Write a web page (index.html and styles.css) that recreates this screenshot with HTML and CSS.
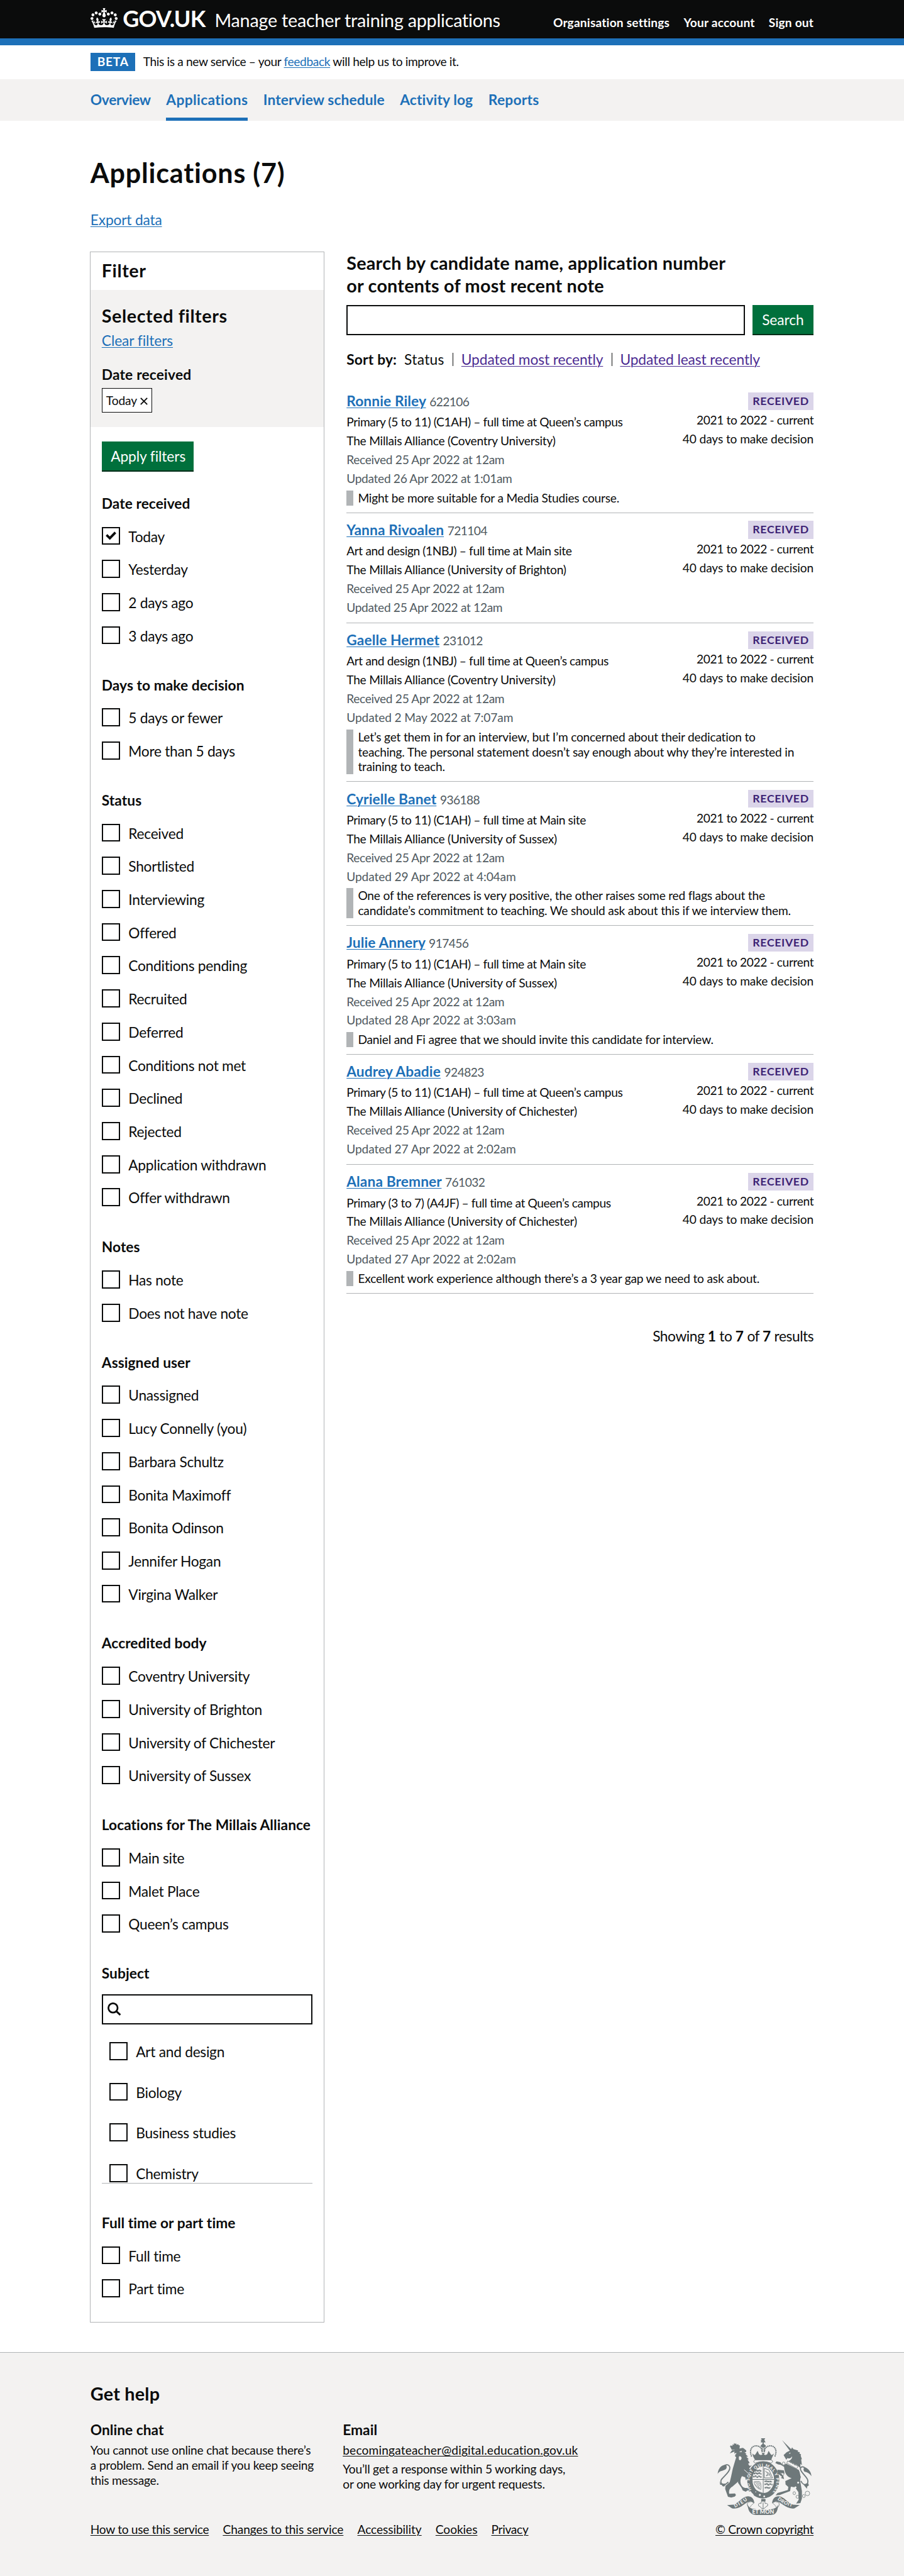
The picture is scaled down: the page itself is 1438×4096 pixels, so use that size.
FILE: index.html
```html
<!DOCTYPE html>
<html lang="en">
<head>
<meta charset="utf-8">
<title>Applications (7) - Manage teacher training applications - GOV.UK</title>
<link rel="stylesheet" href="styles.css">
</head>
<body>
<header class="header">
  <div class="container header-row">
    <a class="logo">
      <svg class="crown" viewBox="0 0 132 97"><path fill="currentColor" fill-rule="evenodd" d="M25 30.2c3.5 1.5 7.7-.2 9.1-3.7 1.5-3.6-.2-7.8-3.9-9.2-3.6-1.4-7.6.3-9.1 3.9-1.4 3.5.3 7.5 3.9 9zM9 39.5c3.6 1.5 7.8-.2 9.2-3.7 1.5-3.6-.2-7.8-3.9-9.1-3.6-1.5-7.6.2-9.1 3.8-1.4 3.5.3 7.5 3.8 9zM4.4 57.2c3.5 1.5 7.7-.2 9.1-3.8 1.5-3.6-.2-7.7-3.9-9.1-3.5-1.5-7.6.3-9.1 3.8-1.4 3.5.3 7.6 3.9 9.1zm38.3-21.4c3.5 1.5 7.7-.2 9.1-3.8 1.5-3.6-.2-7.7-3.9-9.1-3.6-1.5-7.6.3-9.1 3.8-1.3 3.6.4 7.7 3.9 9.1zm64.4-5.6c-3.6 1.5-7.8-.2-9.1-3.7-1.5-3.6.2-7.8 3.8-9.2 3.6-1.4 7.7.3 9.2 3.9 1.3 3.5-.4 7.5-3.9 9zm15.9 9.3c-3.6 1.5-7.7-.2-9.1-3.7-1.5-3.6.2-7.8 3.7-9.1 3.6-1.5 7.7.2 9.2 3.8 1.5 3.5-.3 7.5-3.8 9zm4.7 17.7c-3.6 1.5-7.8-.2-9.2-3.8-1.5-3.6.2-7.7 3.9-9.1 3.6-1.5 7.7.3 9.2 3.8 1.3 3.5-.4 7.6-3.9 9.1zM89.3 35.8c-3.6 1.5-7.8-.2-9.2-3.8-1.4-3.6.2-7.7 3.9-9.1 3.6-1.5 7.7.3 9.2 3.8 1.4 3.6-.3 7.7-3.9 9.1zM69.7 17.7l8.9 4.7V9.3l-8.9 2.8c-.2-.3-.5-.6-.9-.9L72.4 0H59.6l3.5 11.2c-.3.3-.6.5-.9.9l-8.8-2.8v13.1l8.8-4.7c.3.3.6.7.9.9l-5 15.4v.1c-.2.8-.4 1.6-.4 2.4 0 4.1 3.1 7.5 7 8.1h.2c.3 0 .7.1 1 .1.4 0 .7 0 1-.1h.2c4-.6 7.1-4.1 7.1-8.1 0-.8-.1-1.7-.4-2.4V34l-5.1-15.4c.4-.2.7-.6 1-.9zM66 92.8c16.9 0 32.8 1.1 47.1 3.2 4-16.9 8.9-26.7 14-33.5l-9.6-3.4c1 4.9 1.1 7.2 0 10.2-1.5-1.4-3-4.3-4.2-8.7L108.6 76c2.8-2 5-3.2 7.5-3.3-4.4 9.4-10 11.9-13.6 11.2-4.3-.8-6.3-4.6-5.6-7.9 1-4.7 5.7-5.9 8-.5 4.3-8.7-3-11.4-7.6-8.8 7.1-7.2 7.9-13.5 2.1-21.1-8 6.1-8.1 12.3-4.5 20.8-4.7-5.4-12.1-2.5-9.5 6.2 3.4-5.2 7.9-2 7.2 3.1-.6 4.3-6.4 7.8-13.5 7.2-10.3-.9-10.9-8-11.2-13.8 2.5-.5 7.1 1.8 11 7.3L80.2 60c-4.1 4.4-8 5.3-12.3 5.4 1.4-4.4 8-11.6 8-11.6H55.5s6.4 7.2 7.9 11.6c-4.2-.1-8-1-12.3-5.4l1.4 16.4c3.9-5.5 8.5-7.7 10.9-7.3-.3 5.8-.9 12.8-11.1 13.8-7.2.6-12.9-2.9-13.5-7.2-.7-5 3.8-8.3 7.1-3.1 2.7-8.7-4.6-11.6-9.4-6.2 3.7-8.5 3.6-14.7-4.6-20.8-5.8 7.6-5 13.9 2.2 21.1-4.7-2.6-11.9.1-7.7 8.8 2.3-5.5 7.1-4.2 8.1.5.7 3.3-1.3 7.1-5.7 7.9-3.5.7-9-1.8-13.5-11.2 2.5.1 4.7 1.3 7.5 3.3l-4.7-15.4c-1.2 4.4-2.7 7.2-4.3 8.7-1.1-3-.9-5.3 0-10.2l-9.5 3.4c5 6.9 9.9 16.7 14 33.5 14.8-2.1 30.8-3.2 47.7-3.2z"/></svg>
      <span class="logo-text">GOV.UK</span>
    </a>
    <span class="product">Manage teacher training applications</span>
    <nav class="account"><a>Organisation settings</a><a>Your account</a><a>Sign out</a></nav>
  </div>
</header>
<div class="container phase"><strong class="phase-tag">BETA</strong><span>This is a new service – your <a class="link">feedback</a> will help us to improve it.</span></div>
<nav class="nav"><div class="container nav-row"><a>Overview</a><a class="current">Applications</a><a>Interview schedule</a><a>Activity log</a><a>Reports</a></div></nav>

<main class="container main">
  <h1>Applications (7)</h1>
  <p class="export"><a class="link">Export data</a></p>
  <div class="columns">
    <aside class="filter">
      <div class="filter-head"><h2>Filter</h2></div>
      <div class="selected">
        <h2>Selected filters</h2>
        <p class="clear"><a class="link">Clear filters</a></p>
        <h3>Date received</h3>
        <a class="chip">Today <svg viewBox="0 0 10 10"><path d="M.7.7l8.6 8.6M9.3.7L.7 9.3" stroke="currentColor" stroke-width="1.6"/></svg></a>
      </div>
      <div class="options">
        <button class="button apply">Apply filters</button>
        <fieldset><legend>Date received</legend>
          <label><i class="box"><svg viewBox="0 0 24 24"><path d="M6.2 10.6l4.4 4.2 7.4-7.6" fill="none" stroke="currentColor" stroke-width="3.2"/></svg></i>Today</label>
          <label><i class="box"></i>Yesterday</label>
          <label><i class="box"></i>2 days ago</label>
          <label><i class="box"></i>3 days ago</label>
        </fieldset>
        <fieldset><legend>Days to make decision</legend>
          <label><i class="box"></i>5 days or fewer</label>
          <label><i class="box"></i>More than 5 days</label>
        </fieldset>
        <fieldset><legend>Status</legend>
          <label><i class="box"></i>Received</label>
          <label><i class="box"></i>Shortlisted</label>
          <label><i class="box"></i>Interviewing</label>
          <label><i class="box"></i>Offered</label>
          <label><i class="box"></i>Conditions pending</label>
          <label><i class="box"></i>Recruited</label>
          <label><i class="box"></i>Deferred</label>
          <label><i class="box"></i>Conditions not met</label>
          <label><i class="box"></i>Declined</label>
          <label><i class="box"></i>Rejected</label>
          <label><i class="box"></i>Application withdrawn</label>
          <label><i class="box"></i>Offer withdrawn</label>
        </fieldset>
        <fieldset><legend>Notes</legend>
          <label><i class="box"></i>Has note</label>
          <label><i class="box"></i>Does not have note</label>
        </fieldset>
        <fieldset><legend>Assigned user</legend>
          <label><i class="box"></i>Unassigned</label>
          <label><i class="box"></i>Lucy Connelly (you)</label>
          <label><i class="box"></i>Barbara Schultz</label>
          <label><i class="box"></i>Bonita Maximoff</label>
          <label><i class="box"></i>Bonita Odinson</label>
          <label><i class="box"></i>Jennifer Hogan</label>
          <label><i class="box"></i>Virgina Walker</label>
        </fieldset>
        <fieldset><legend>Accredited body</legend>
          <label><i class="box"></i>Coventry University</label>
          <label><i class="box"></i>University of Brighton</label>
          <label><i class="box"></i>University of Chichester</label>
          <label><i class="box"></i>University of Sussex</label>
        </fieldset>
        <fieldset><legend>Locations for The Millais Alliance</legend>
          <label><i class="box"></i>Main site</label>
          <label><i class="box"></i>Malet Place</label>
          <label><i class="box"></i>Queen’s campus</label>
        </fieldset>
        <fieldset class="subject"><legend>Subject</legend>
          <div class="subject-search"><svg viewBox="0 0 18 18"><circle cx="7.3" cy="7.3" r="6.1" fill="none" stroke="currentColor" stroke-width="2.3"/><path d="M11.6 11.6l5.4 5" stroke="currentColor" stroke-width="2.5"/></svg></div>
          <div class="scroll">
            <label><i class="box"></i>Art and design</label>
            <label><i class="box"></i>Biology</label>
            <label><i class="box"></i>Business studies</label>
            <label><i class="box"></i>Chemistry</label>
          </div>
        </fieldset>
        <fieldset class="last"><legend>Full time or part time</legend>
          <label><i class="box"></i>Full time</label>
          <label><i class="box"></i>Part time</label>
        </fieldset>
      </div>
    </aside>

    <section class="results">
      <h2 class="search-label">Search by candidate name, application number<br>or contents of most recent note</h2>
      <div class="search"><input class="search-input" type="text"><button class="button">Search</button></div>
      <div class="sort"><b>Sort by:</b><span>Status</span><i></i><a class="link visited">Updated most recently</a><i></i><a class="link visited">Updated least recently</a></div>

      <article class="card">
        <div class="info"><h3><a class="link">Ronnie Riley</a> <small>622106</small></h3>
          <p class="course">Primary (5 to 11) (C1AH) – full time at Queen’s campus</p><p class="provider">The Millais Alliance (Coventry University)</p>
          <p class="muted tight">Received 25 Apr 2022 at 12am</p><p class="muted tight">Updated 26 Apr 2022 at 1:01am</p></div>
        <div class="state"><strong class="tag">RECEIVED</strong><p class="cycle">2021 to 2022 - current</p><p>40 days to make decision</p></div>
        <blockquote>Might be more suitable for a Media Studies course.</blockquote>
      </article>
      <article class="card plain">
        <div class="info"><h3><a class="link">Yanna Rivoalen</a> <small>721104</small></h3>
          <p class="course">Art and design (1NBJ) – full time at Main site</p><p class="provider">The Millais Alliance (University of Brighton)</p>
          <p class="muted tight">Received 25 Apr 2022 at 12am</p><p class="muted tight">Updated 25 Apr 2022 at 12am</p></div>
        <div class="state"><strong class="tag">RECEIVED</strong><p class="cycle">2021 to 2022 - current</p><p>40 days to make decision</p></div>
      </article>
      <article class="card">
        <div class="info"><h3><a class="link">Gaelle Hermet</a> <small>231012</small></h3>
          <p class="course">Art and design (1NBJ) – full time at Queen’s campus</p><p class="provider">The Millais Alliance (Coventry University)</p>
          <p class="muted tight">Received 25 Apr 2022 at 12am</p><p class="muted">Updated 2 May 2022 at 7:07am</p></div>
        <div class="state"><strong class="tag">RECEIVED</strong><p class="cycle">2021 to 2022 - current</p><p>40 days to make decision</p></div>
        <blockquote>Let’s get them in for an interview, but I’m concerned about their dedication to<br>teaching. The personal statement doesn’t say enough about why they’re interested in<br>training to teach.</blockquote>
      </article>
      <article class="card">
        <div class="info"><h3><a class="link">Cyrielle Banet</a> <small>936188</small></h3>
          <p class="course">Primary (5 to 11) (C1AH) – full time at Main site</p><p class="provider">The Millais Alliance (University of Sussex)</p>
          <p class="muted tight">Received 25 Apr 2022 at 12am</p><p class="muted">Updated 29 Apr 2022 at 4:04am</p></div>
        <div class="state"><strong class="tag">RECEIVED</strong><p class="cycle">2021 to 2022 - current</p><p>40 days to make decision</p></div>
        <blockquote>One of the references is very positive, the other raises some red flags about the<br>candidate’s commitment to teaching. We should ask about this if we interview them.</blockquote>
      </article>
      <article class="card">
        <div class="info"><h3><a class="link">Julie Annery</a> <small>917456</small></h3>
          <p class="course">Primary (5 to 11) (C1AH) – full time at Main site</p><p class="provider">The Millais Alliance (University of Sussex)</p>
          <p class="muted tight">Received 25 Apr 2022 at 12am</p><p class="muted">Updated 28 Apr 2022 at 3:03am</p></div>
        <div class="state"><strong class="tag">RECEIVED</strong><p class="cycle">2021 to 2022 - current</p><p>40 days to make decision</p></div>
        <blockquote>Daniel and Fi agree that we should invite this candidate for interview.</blockquote>
      </article>
      <article class="card plain">
        <div class="info"><h3><a class="link">Audrey Abadie</a> <small>924823</small></h3>
          <p class="course">Primary (5 to 11) (C1AH) – full time at Queen’s campus</p><p class="provider">The Millais Alliance (University of Chichester)</p>
          <p class="muted tight">Received 25 Apr 2022 at 12am</p><p class="muted">Updated 27 Apr 2022 at 2:02am</p></div>
        <div class="state"><strong class="tag">RECEIVED</strong><p class="cycle">2021 to 2022 - current</p><p>40 days to make decision</p></div>
      </article>
      <article class="card">
        <div class="info"><h3><a class="link">Alana Bremner</a> <small>761032</small></h3>
          <p class="course">Primary (3 to 7) (A4JF) – full time at Queen’s campus</p><p class="provider">The Millais Alliance (University of Chichester)</p>
          <p class="muted tight">Received 25 Apr 2022 at 12am</p><p class="muted">Updated 27 Apr 2022 at 2:02am</p></div>
        <div class="state"><strong class="tag">RECEIVED</strong><p class="cycle">2021 to 2022 - current</p><p>40 days to make decision</p></div>
        <blockquote>Excellent work experience although there’s a 3 year gap we need to ask about.</blockquote>
      </article>
      <p class="showing">Showing <b>1</b> to <b>7</b> of <b>7</b> results</p>
    </section>
  </div>
</main>

<footer class="footer">
  <div class="container footer-grid">
    <div class="help">
      <h2>Get help</h2>
      <div class="help-columns">
        <div><h3>Online chat</h3><p>You cannot use online chat because there’s<br>a problem. Send an email if you keep seeing<br>this message.</p></div>
        <div><h3>Email</h3><p class="email"><a class="link">becomingateacher@digital.education.gov.uk</a></p><p class="gap">You’ll get a response within 5 working days,<br>or one working day for urgent requests.</p></div>
      </div>
      <div class="footer-links"><a class="link">How to use this service</a><a class="link wide">Changes to this service</a><a class="link wide">Accessibility</a><a class="link wide">Cookies</a><a class="link">Privacy</a></div>
    </div>
    <div class="copyright">
      <svg class="crest" viewBox="72 60 750 612">
        <defs>
          <path id="garter" d="M344 470A107 121 0 1 1 515 486"/>
          <path id="left-scroll" d="M212 612Q265 590 318 548"/>
          <path id="right-scroll" d="M550 548Q610 595 680 608"/>
        </defs>
        <g class="ink">
          <!-- lion -->
          <path d="M188 153l-15-29 8-8 10 6 4-14 8 6 3-17 8 8 8-5 4 12 12-6 4 9 10 3-4 30z"/>
          <path d="M172 180l17-24 84-20 8 3 22 19-2 12-12 2 16 13-8 2 20 18-14 3 20 18-10 3 17 28-12 4c8 18 12 24 30 12l-22 27c16 20 30 42 37 62l4 46-30 13-8-14-12 4-3-26-14 8-6-22-26-9c-12 20-14 40-9 60 8 22 20 34 42 34h26l12 14-6 16-20-12-14 12-24-10-10-22-28-40 2-10-46 40c-24 14-30 30-26 58l46-2 8 12-10 12-28 8-26-6-22-62 2-25 34-30c14-50 18-80 24-105l22-75 6-18-10-8 4-16-10-4 2-18z"/>
          <path d="M75 346c2-34 18-64 52-73 18-8 28 20 12 34-10 8-34 14-42 16-12 6-18 12-22 23z"/>
          <path d="M88 402c10 28 34 32 60 18l-22 24-14-4-4-10-12 0z"/>
          <!-- unicorn -->
          <path d="M588 75l82 82-18 6z"/>
          <path d="M600 194l24-22 30-16 14-24 10 14 38 12-4 8 18 6-4 8 14 10-4 8 10 28-6 2 6 46-12-10v34l-14-14c-24-18-44-22-78-42 20-14 26-22 26-38-10 16-22 20-38 14l-8 14z"/>
          <path d="M622 262l96 46c16 26 18 52 14 90l14 82v60l-12 36-34 4 20-30-2-60-26-40-34-4-6 34-48 18-34 14-34 2 16-18 36-10 46-14 4-24-22-20-2-28 50-22c-38-10-56-40-60-90l-26-16-22-4-22-12 10-12 30 6 24 26z"/>
          <path d="M602 316l-52-6 6 32 32 26-10 8 26 10-6-26-24-26 34 8z"/>
          <path d="M822 362c-2-32-20-56-48-70-16 0-20 20-8 34 26 6 42 16 56 36z"/>
          <path d="M760 430l34-14 8 18-14 10-2 18z"/>
          <!-- royal crown -->
          <path d="M420 60h34l-8 14 8 12v-10 20l-10-6-3 14 16 12h-38l14-12-3-14-10 6V70l8 6zM417 116h42l-4 14-16 6-18-6zM427 138h7v32h-7zM441 138h7v32h-7zM360 210l-10-28 18 12 8-6 17-28 12 28 14 6 18-8 18 8 14-6 12-28 17 28 8 6 18-12-14 28-8 22H372z"/>
          <path d="M425 176h26l-8 14 8 14h-26l8-14z"/>
          <!-- ribbons -->
          <path d="M150 592l52-4c46-16 74-70 118-66 36 4 44 30 48 56l-28-14c-44-4-78 68-150 54zM728 592l-54-4c-46-16-74-70-118-66-36 4-44 30-48 56l28-14c44-4 82 66 150 54zM310 578c4 20 24 42 50 44 52 10 106 10 156 0 22-4 42-24 44-40-8 40-8 68-36 84-54 12-118 12-170 0-30-16-36-40-44-88zM422 543h34v20h-34z"/>
        </g>
        <g class="line">
          <path d="M160 408c-28 32-74 20-56-18 22-30 72-64 68-98-6-26-36-28-46-6" stroke-width="9"/>
          <path d="M738 400c22 48 70 30 52-14-18-34-56-56-56-84 2-20 30-18 36-2" stroke-width="9"/>
          <path d="M346 205C320 150 352 112 394 122c26 6 34 24 34 48M530 205c26-55-6-93-48-83-26 6-34 24-34 48" stroke-width="10" stroke-dasharray="10 4"/>
          <path d="M374 232h128c18 10 10 22-4 26-40-16-84-16-124 0-14-6-16-18 0-26z" fill="#f3f2f1" stroke-width="5"/>
          <path d="M340 566c-32-2-38 24-18 44M536 566c32-2 38 24 18 44M362 576c-14 18-26 18-26 32M514 576c14 18 26 18 26 32" stroke-width="4"/>
          <g stroke-width="4"><ellipse cx="601" cy="261" rx="11" ry="12"/><ellipse cx="592" cy="345" rx="11" ry="13"/><ellipse cx="725" cy="369" rx="11" ry="13"/><ellipse cx="685" cy="497" rx="10" ry="12"/><ellipse cx="711" cy="526" rx="12" ry="12"/><ellipse cx="761" cy="520" rx="11" ry="12"/><circle cx="790" cy="499" r="18"/></g>
          <ellipse cx="438" cy="391" rx="107" ry="126" stroke-width="42"/>
          <path d="M427 620l-14-16c-24-4-12-36 8-24-4-12 8-22 16-24 10 6 18 14 16 24 22-10 30 20 8 24l-16 16zM437 570v50" stroke-width="5"/>
        </g>
        <ellipse class="paper" cx="438" cy="388" rx="86" ry="104"/>
        <g class="line" stroke-width="5">
          <path d="M438 284v212M350 388h176"/>
          <path d="M372 322l14-8 10 8 12-8 14 10M362 344l16-8 12 8 14-8 20 10M358 368l18-8 14 10 14-8 20 8M448 404l16-4 10 8 16-6 18 6M448 428l18-6 12 10 14-8 20 6M450 456l16-6 10 8 20-6" stroke-width="11" stroke-dasharray="13 3"/>
          <path d="M446 300l38 12 28 64h-66zM456 320l18 22-12 18 24-12 12 20M470 330l24 18" stroke-width="5"/>
          <path d="M366 406l40-2c14 4 16 40 12 64-30-10-50-32-52-62zM376 408l34 50M388 408l24 34M400 408l14 20M368 424l40 38" stroke-width="4"/>
        </g>
        <path class="ink" d="M364 494c-6-18 22-28 36-12 30 16 72 20 108 24-34 38-96 42-138 14-10-6-12-16-6-26z"/>
        <g class="paper"><circle cx="411" cy="511" r="8"/><circle cx="446" cy="523" r="7"/><circle cx="378" cy="487" r="4"/><circle cx="695" cy="451" r="8"/><circle cx="716" cy="413" r="8"/>
          <path d="M203 182l22-6-4 12zM246 168l22-8-4 12zM244 206c8-8 18 0 22 10-2 20-18 24-22 10zM640 180l16-6-4 10z"/></g>
        <path d="M628 240l88 60M286 310l58 52M626 262l92 46" fill="none" stroke="#f3f2f1" stroke-width="5"/>
        <path d="M632 240l84 44-12 18-78-44zM640 248l8-10 8 18 10-10 6 18 12-10 4 20 12-8" class="line" stroke-width="4"/>
        <g class="motto">
          <text font-size="33"><textPath href="#garter" startOffset="0" textLength="515">HO SOIT QUI MAL Y PENSE</textPath></text>
          <text font-size="38"><textPath href="#left-scroll" textLength="118">DIEU</textPath></text>
          <text font-size="38"><textPath href="#right-scroll" textLength="130">DROIT</textPath></text>
          <text x="350" y="660" font-size="44" textLength="174" lengthAdjust="spacingAndGlyphs">ET MON</text>
        </g>
      </svg>
      <a class="link">© Crown copyright</a>
    </div>
  </div>
</footer>
</body>
</html>
```
FILE: styles.css
```css
:root { --ink: #0b0c0c; --blue: #1d70b8; --grey: #f3f2f1; --rule: #b1b4b6; --green: #00703c; }
* { box-sizing: border-box; margin: 0; padding: 0; }
/* 1rem is ten layout units */
html { font-size: 11.983px; }
body { font: 1.9rem/2.5rem Lato, "Liberation Sans", sans-serif; letter-spacing: -.004em; font-variant-ligatures: none; color: var(--ink); background: #fff; }
.container { width: 96rem; margin: 0 auto; }
.link { color: var(--blue); text-decoration: underline; text-decoration-thickness: 1px; text-underline-offset: .1em; }
.visited { color: #4c2c92; }
h1, h2, h3, legend, b { font-weight: 700; letter-spacing: .008em; }
h2 { font-size: 2.4rem; line-height: 3rem; }
h3 { font-size: 1.9rem; line-height: 2.5rem; }

.header { height: 6rem; background: var(--ink); border-bottom: 1rem solid var(--blue); color: #fff; }
.header-row { display: flex; align-items: baseline; line-height: 4.96rem; }
.logo { display: flex; width: 16.5rem; align-items: baseline; }
.crown { width: 3.6rem; height: 2.65rem; margin-right: .7rem; transform: translateY(.15rem); }
.logo-text { font-size: 3rem; font-weight: 700; letter-spacing: -.022em; }
.product { font-size: 2.4rem; letter-spacing: -.0085em; }
.account { display: flex; gap: 1.85rem; margin-left: auto; font-size: 1.6rem; font-weight: 700; letter-spacing: .01em; }

.phase { display: flex; gap: 1.1rem; padding: 1rem 0; height: 4.5rem; font-size: 1.6rem; line-height: 2.4rem; letter-spacing: -.0185em; }
.phase-tag { width: 5.9rem; height: 2.45rem; padding-left: .1rem; background: var(--blue); color: #fff; letter-spacing: .04em; line-height: 2.4rem; text-align: center; }
.nav { height: 5.5rem; background: var(--grey); }
.nav-row { display: flex; gap: 2.05rem; font-weight: 700; letter-spacing: .005em; color: var(--blue); }
.nav-row a { height: 5.5rem; padding-top: 1.48rem; }
.nav-row a:first-child { letter-spacing: -.015em; }
.nav-row a:last-child { letter-spacing: .012em; }
.nav-row .current { border-bottom: .5rem solid var(--blue); letter-spacing: .016em; }

.main { height: 296.1rem; padding-top: 4.91rem; }
h1 { font-size: 3.6rem; line-height: 4rem; letter-spacing: .018em; }
.export { margin-top: 3.07rem; letter-spacing: -.008em; }
.columns { display: grid; grid-template-columns: 31rem 62rem; justify-content: space-between; align-items: start; margin-top: 3.02rem; }

.filter { outline: 1px solid var(--rule); height: 274.6rem; }
.filter h2 { letter-spacing: .02em; }
.filter-head { height: 5rem; padding: .97rem 1.5rem; }
.selected { height: 18.2rem; padding: 1.97rem 1.5rem 0; background: var(--grey); }
.clear { margin: .55rem 0 1.96rem; }
.chip { display: inline-flex; align-items: center; gap: .4rem; height: 3.2rem; margin-top: .54rem; padding: .05rem .5rem 0; border: 1px solid var(--ink); background: #fff; font-size: 1.6rem; }
.chip svg { width: 1rem; height: 1rem; margin-top: .2rem; }
.options { padding: 1.9rem 1.5rem 0; }
.button { height: 4rem; padding: 0 1.2rem .05rem; border: 0; background: var(--green); box-shadow: inset 0 -2px #002d18; color: #fff; font: inherit; letter-spacing: -.004em; white-space: nowrap; }
.apply { display: block; width: 12.2rem; margin-bottom: 2.9rem; letter-spacing: -.004em; }
fieldset { border: 0; margin-bottom: 2.1rem; }
legend { display: block; padding-top: .08rem; margin-bottom: 1.82rem; line-height: 2.5rem; letter-spacing: .002em; white-space: nowrap; }
label { display: flex; gap: 1.15rem; height: 4.4rem; line-height: 2.67rem; letter-spacing: -.0125em; }
.box { flex: none; width: 2.4rem; height: 2.4rem; border: 2px solid var(--ink); }
.box svg { display: block; width: 2.4rem; height: 2.4rem; margin: -2px; }
.subject { margin-bottom: 3.9rem; }
.subject legend { margin-bottom: 1.52rem; }
.subject-search { height: 4rem; padding: .85rem .6rem; border: 2px solid var(--ink); }
.subject-search svg { display: block; width: 1.8rem; height: 1.8rem; }
.scroll { height: 21.1rem; padding: 2.3rem 1rem 0; overflow: hidden; border-bottom: 1px solid var(--rule); }
.scroll label { height: 5.4rem; }

.results { margin-top: -.04rem; }
.search { display: flex; gap: 1rem; margin-top: 1.04rem; }
.search-input { flex: 1; height: 4rem; border: 2px solid var(--ink); background: #fff; }
.search .button { width: 8.15rem; }
.sort { display: flex; align-items: center; gap: 1rem; margin: 1.98rem 0 2rem; white-space: nowrap; }
.sort span { letter-spacing: .013em; }
.sort i { width: 1px; height: 1.75rem; margin: 0 .05rem 0 .13rem; background: var(--ink); }
.card { display: grid; grid-template-columns: 1fr auto; padding: 1.02rem 0 .92rem; border-bottom: 1px solid var(--rule); font-size: 1.6rem; letter-spacing: -.014em; }
.card p { line-height: 2.5rem; }
.card.plain { padding-bottom: .74rem; }
.card h3 { margin-bottom: .27rem; letter-spacing: .004em; }
.card small { font-size: 1.6rem; font-weight: 400; line-height: 1; color: #505a5f; letter-spacing: -.03em; }
.course { letter-spacing: -.02em; }
.provider { letter-spacing: -.012em; }
.muted { color: #505a5f; letter-spacing: -.006em; }
.tight { letter-spacing: -.017em; }
.state { text-align: right; letter-spacing: -.006em; }
.cycle { letter-spacing: -.019em; }
.tag { display: block; width: 8.7rem; height: 2.35rem; margin: .05rem 0 .12rem auto; background: #dbd5e9; color: #3d2375; font-size: 1.48rem; line-height: 2.35rem; letter-spacing: .035em; text-align: center; }
blockquote { grid-column: 1 / 3; margin-top: .3rem; padding-left: .6rem; border-left: 1rem solid var(--rule); line-height: 2rem; letter-spacing: -.0105em; white-space: nowrap; }
.showing { margin-top: 4.4rem; text-align: right; letter-spacing: -.02em; }
.showing b { letter-spacing: 0; }

.footer { height: 29.7rem; border-top: 1px solid var(--rule); background: var(--grey); font-size: 1.6rem; line-height: 2rem; letter-spacing: -.0115em; }
.footer .link { color: var(--ink); }
.footer-grid { display: flex; justify-content: space-between; padding-top: 3.98rem; }
.help-columns { display: flex; height: 13.5rem; margin-top: 2.02rem; }
.help-columns > div { width: 33.5rem; white-space: nowrap; }
.help h3 { margin-bottom: .43rem; letter-spacing: 0; }
.help .email { letter-spacing: .008em; }
.help .gap { margin-top: .53rem; }
.footer-links { display: flex; gap: 1.85rem; letter-spacing: -.016em; }
.footer-links .wide { letter-spacing: -.004em; }
.copyright { display: flex; flex-direction: column; align-items: flex-end; padding-top: 7.35rem; letter-spacing: -.014em; }
.crest { display: block; width: 12.5rem; height: 10.2rem; margin: 0 .3rem .97rem 0; }
.ink { fill: #6e787a; }
.line { fill: none; stroke: #6e787a; }
.paper { fill: var(--grey); }
.motto { fill: var(--grey); font-weight: 900; letter-spacing: 0; }
```
